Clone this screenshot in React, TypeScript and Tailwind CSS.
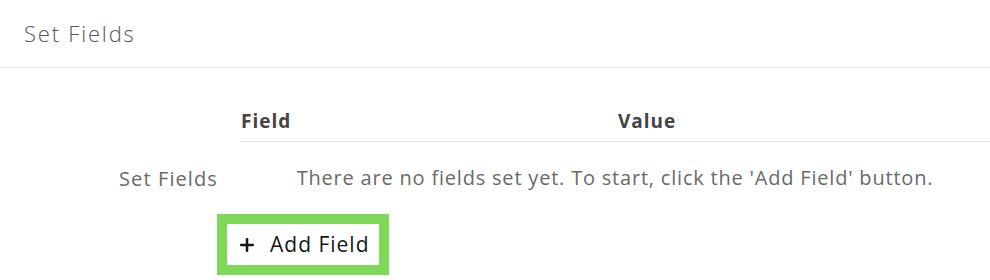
import { Plus } from "lucide-react";

export default function App() {
  return (
    <div className="w-[990px] h-[280px] bg-white overflow-hidden font-['Open_Sans',_'Liberation_Sans',_sans-serif]">
      {/* Page header */}
      <div className="h-[68px] flex items-center px-6 border-b border-[#e4e4e4]">
        <h1 className="text-[22px] font-light text-[#555555] tracking-[1.8px]">Set Fields</h1>
      </div>

      <div className="grid grid-cols-[217px_1fr] pt-[34px]">
        {/* Table header */}
        <div />
        <div className="ml-[23px] flex h-[40px] items-center border-b border-[#e4e4e4] text-[19px] font-bold text-[#444444] tracking-[1px]">
          <span className="w-[378px] pl-px">Field</span>
          <span>Value</span>
        </div>

        {/* Empty row */}
        <div className="flex items-center justify-end h-[56px] pt-[18px] mr-[-1px] text-[20px] text-[#6a6a6a] tracking-[1.1px]">Set Fields</div>
        <div className="ml-[23px] flex items-center justify-center h-[56px] pt-[16px] text-[20px] text-[#6a6a6a] tracking-[0.8px]">
          There are no fields set yet. To start, click the 'Add Field' button.
        </div>

        {/* Add button */}
        <div />
        <div className="pt-[16px]">
          <button className="flex items-center gap-[13px] h-[61px] w-[172px] border-[10px] border-[#7dd957] bg-white pl-[10px] text-[21px] text-[#111a11] tracking-[1px]">
            <Plus size={20} strokeWidth={3} />
            <span>Add Field</span>
          </button>
        </div>
      </div>
    </div>
  );
}
